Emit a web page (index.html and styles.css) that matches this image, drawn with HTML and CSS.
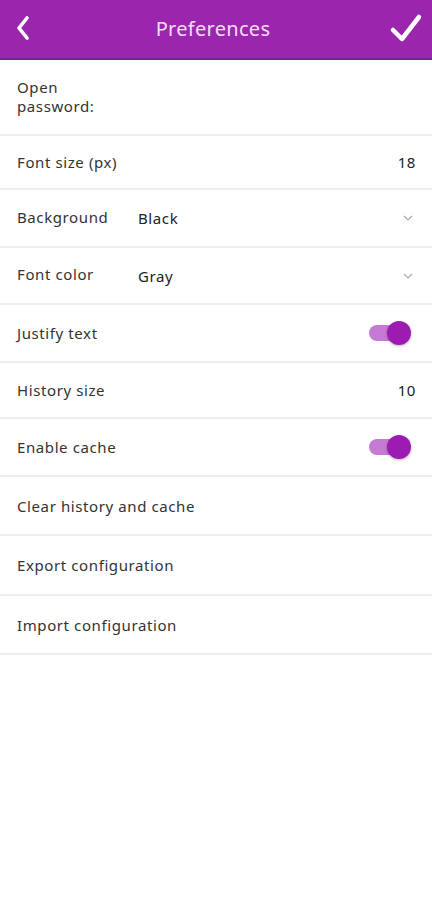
FILE: index.html
```html
<!DOCTYPE html>
<html>
<head>
<meta charset="utf-8">
<link rel="stylesheet" href="styles.css">
</head>
<body>
<div class="app">
  <header class="bar">
    <svg class="back" width="16" height="26" viewBox="0 0 16 26"><path d="M12 3 L4 13 L12 23" fill="none" stroke="#fff" stroke-width="3.6" stroke-linecap="round" stroke-linejoin="round"/></svg>
    <div class="title">Preferences</div>
    <svg class="ok" width="34" height="30" viewBox="0 0 34 30"><path d="M4 17 L13 26 L30 4" fill="none" stroke="#fff" stroke-width="4.5" stroke-linecap="round" stroke-linejoin="round"/></svg>
  </header>
  <div class="list">
    <div class="row r-pass"><div class="label narrow">Open password:</div></div>
    <div class="row h54"><div class="label">Font size (px)</div><div class="value">18</div></div>
    <div class="row h58"><div class="label w121">Background</div><div class="select">Black</div><svg class="chev" width="12" height="8" viewBox="0 0 12 8"><path d="M2 2 L6 6 L10 2" fill="none" stroke="#aaa" stroke-width="1.2"/></svg></div>
    <div class="row h57"><div class="label w121">Font color</div><div class="select">Gray</div><svg class="chev" width="12" height="8" viewBox="0 0 12 8"><path d="M2 2 L6 6 L10 2" fill="none" stroke="#aaa" stroke-width="1.2"/></svg></div>
    <div class="row h58"><div class="label">Justify text</div><div class="toggle"><span class="track"></span><span class="thumb"></span></div></div>
    <div class="row h56"><div class="label">History size</div><div class="value">10</div></div>
    <div class="row h58"><div class="label">Enable cache</div><div class="toggle"><span class="track"></span><span class="thumb"></span></div></div>
    <div class="row h59"><div class="label">Clear history and cache</div></div>
    <div class="row h60"><div class="label">Export configuration</div></div>
    <div class="row h59"><div class="label">Import configuration</div></div>
  </div>
</div>
</body>
</html>
```
FILE: styles.css
```css
* { box-sizing: border-box; }
html, body { margin: 0; padding: 0; background: #fff; }
body { font-family: "Noto Sans", "Open Sans", sans-serif; color: #333; }
.app { width: 432px; }
.bar {
  height: 60px;
  background: #9b26ae;
  border-bottom: 2px solid #7e1c94;
  display: grid;
  grid-template-columns: 1fr auto 1fr;
  align-items: center;
  padding: 0 9px 2px 15px;
}
.title {
  color: #f6dcf6;
  font-size: 20px;
  letter-spacing: 0.3px;
  padding-right: 12px;
}
.back { display: block; justify-self: start; }
.ok { display: block; justify-self: end; }
.list { display: flex; flex-direction: column; }
.row {
  display: flex;
  align-items: center;
  padding: 0 16px 0 17px;
  border-bottom: 2px solid #eeeeee;
  font-size: 15px;
  letter-spacing: 0.6px;
}
.r-pass { height: 76px; align-items: flex-start; padding-top: 18px; }
.narrow { width: 90px; line-height: 19px; }
.h54 { height: 54px; }
.h56 { height: 56px; }
.h57 { height: 57px; }
.h58 { height: 58px; }
.h59 { height: 59px; }
.h60 { height: 60px; }
.label { flex: none; }
.w121 { width: 121px; padding-bottom: 3px; }
.select { flex: 1; color: #222; }
.value { margin-left: auto; color: #222; }
.chev { margin-right: 2px; }
.toggle {
  margin-left: auto;
  margin-right: 5px;
  position: relative;
  width: 42px;
  height: 26px;
}
.track {
  position: absolute;
  left: 0;
  top: 5px;
  width: 36px;
  height: 16px;
  border-radius: 8px;
  background: #c77ad3;
}
.thumb {
  position: absolute;
  right: 0;
  top: 1px;
  width: 24px;
  height: 24px;
  border-radius: 50%;
  background: #9c1bb0;
  box-shadow: 0 1px 3px rgba(0,0,0,0.3);
}
```
